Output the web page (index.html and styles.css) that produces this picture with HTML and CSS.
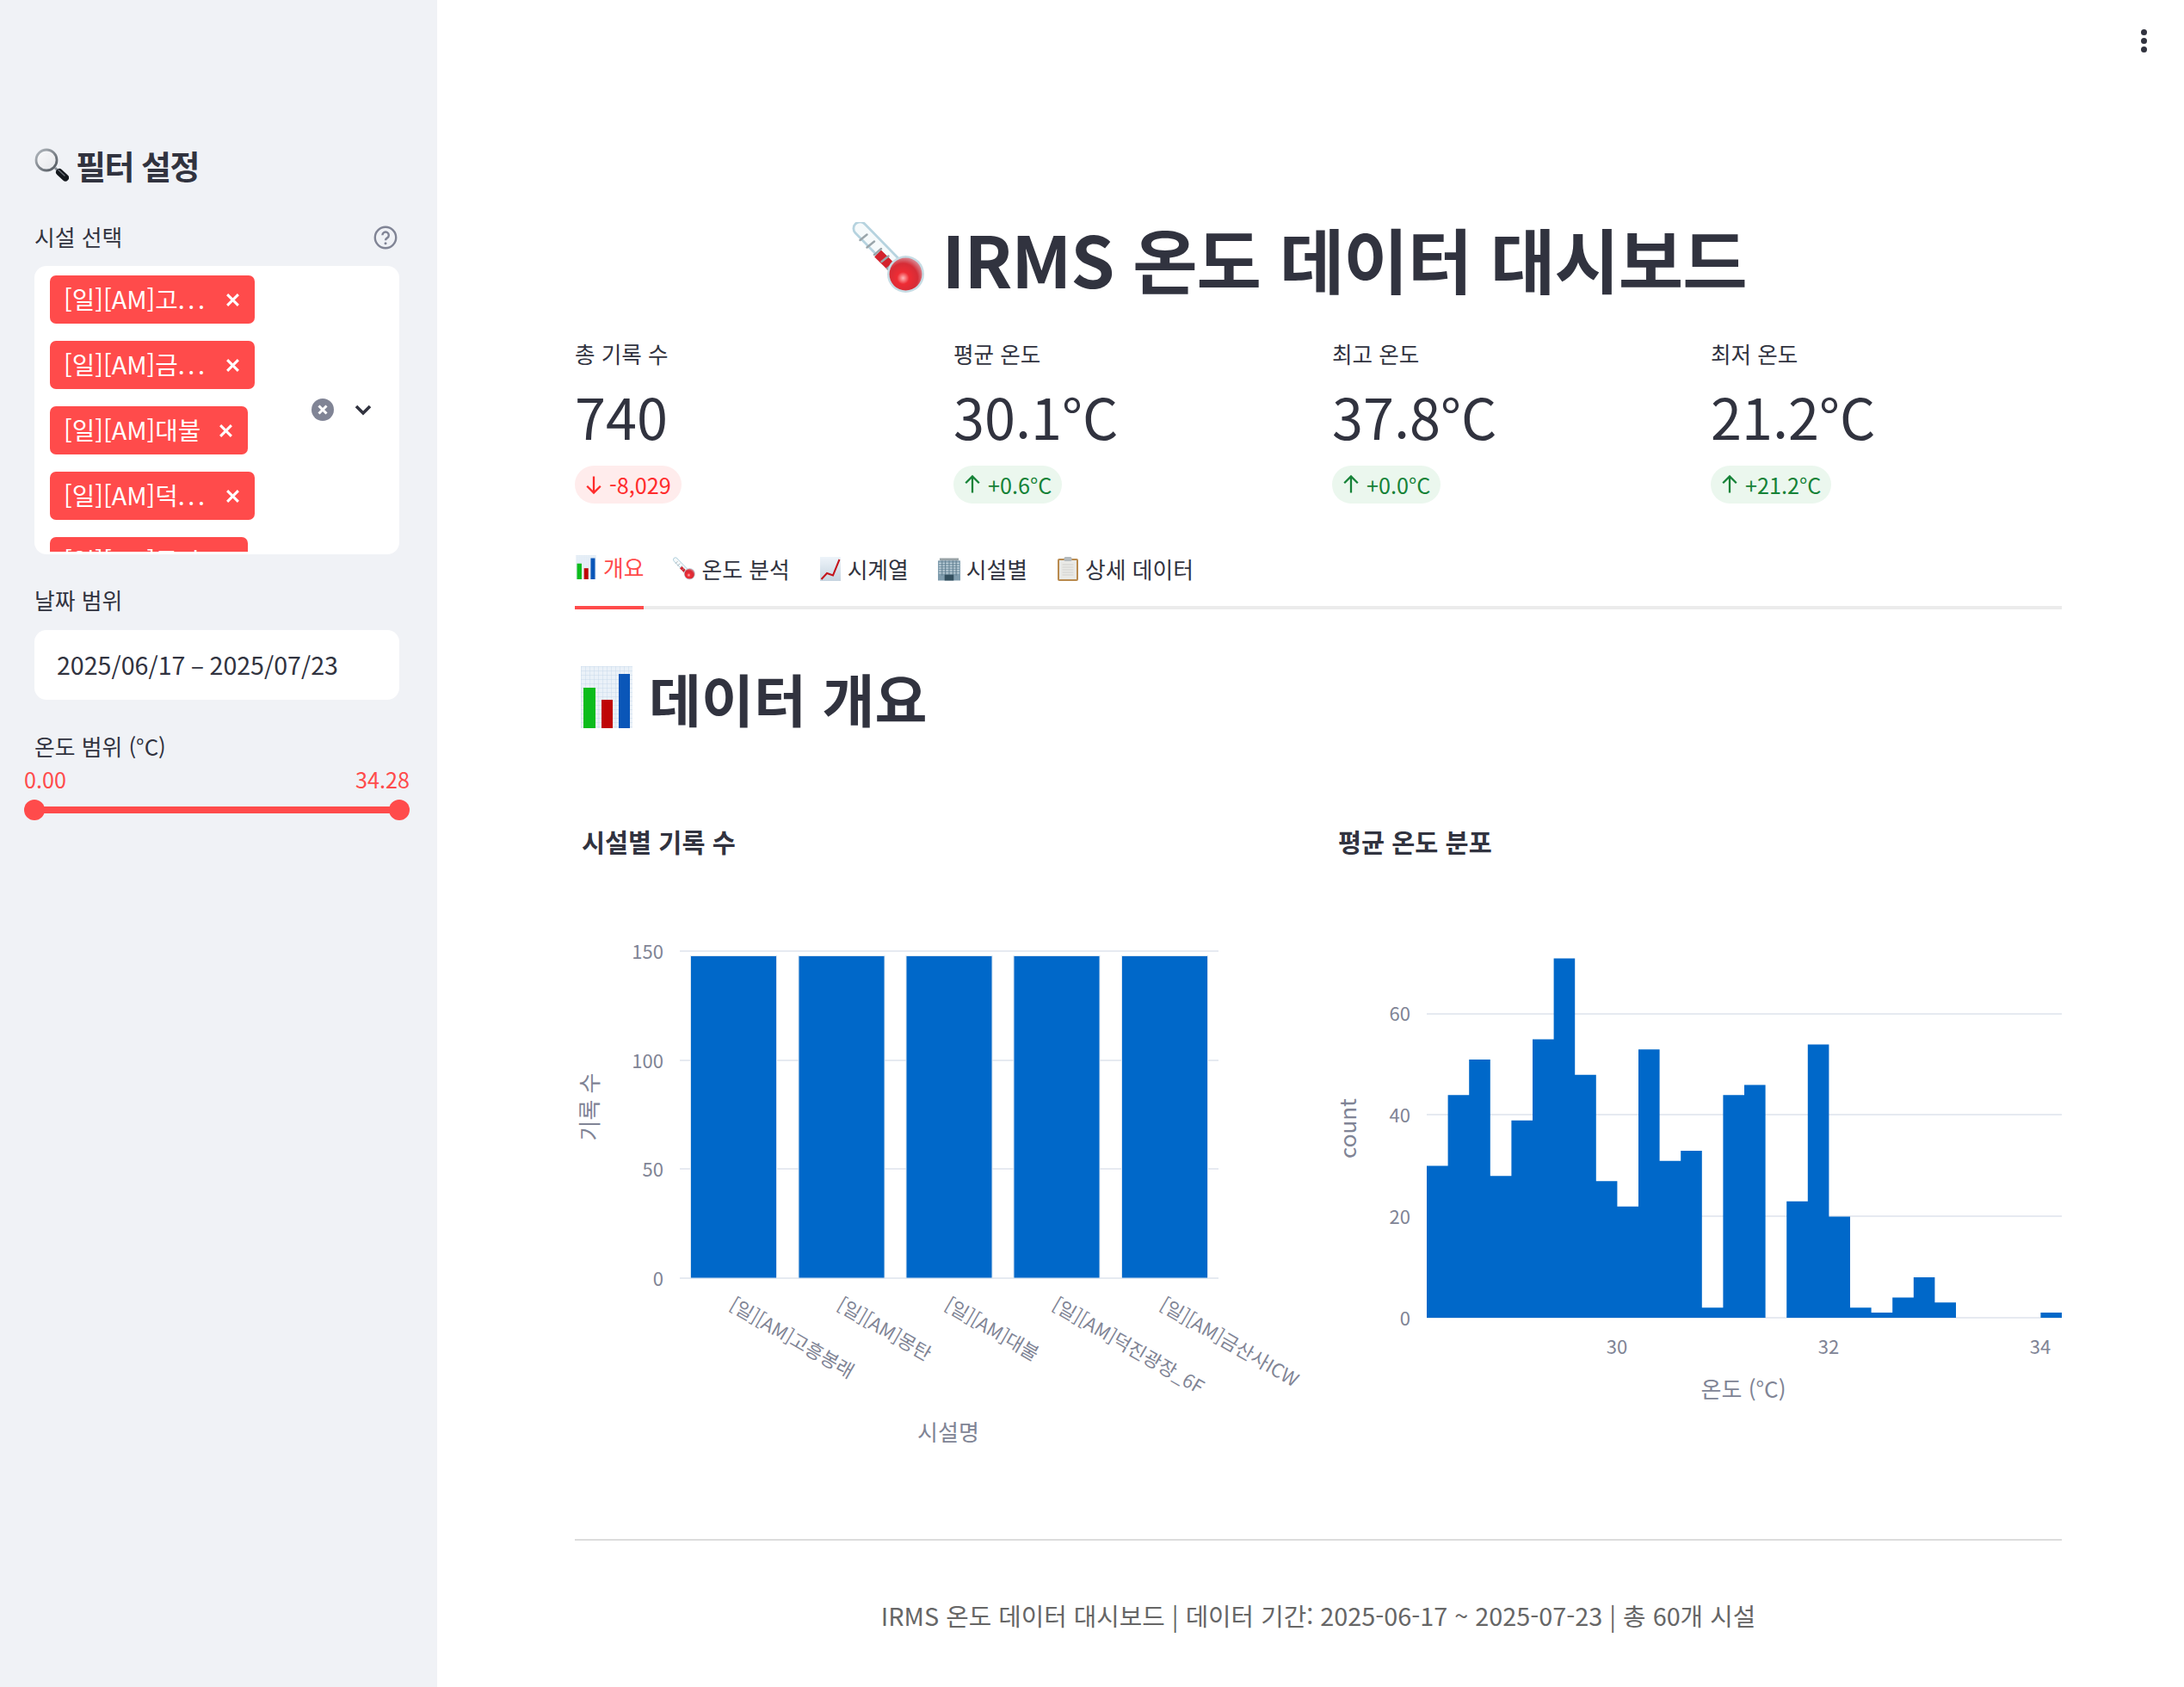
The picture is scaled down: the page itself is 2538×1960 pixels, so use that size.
FILE: index.html
```html
<!DOCTYPE html>
<html lang="ko">
<head>
    <meta charset="UTF-8">
    <title>IRMS 온도 데이터 대시보드</title>
    <link rel="stylesheet" href="styles.css">
</head>
<body>
    <svg class="sprite" xmlns="http://www.w3.org/2000/svg">
        <defs>
            <radialGradient id="bulbRed" cx="0.42" cy="0.62" r="0.62">
                <stop offset="0" stop-color="#ffb8b8"/>
                <stop offset="0.3" stop-color="#ee2c34"/>
                <stop offset="0.72" stop-color="#d62c36"/>
                <stop offset="1" stop-color="#d8808a"/>
            </radialGradient>
            <linearGradient id="lensFill" x1="0" y1="0" x2="1" y2="1">
                <stop offset="0" stop-color="#fbfbfc"/>
                <stop offset="1" stop-color="#e4e6e9"/>
            </linearGradient>
            <linearGradient id="lensRing" x1="0" y1="0" x2="1" y2="1">
                <stop offset="0" stop-color="#b4bac0"/>
                <stop offset="1" stop-color="#4f555c"/>
            </linearGradient>
            <linearGradient id="paperBlue" x1="0" y1="0" x2="0" y2="1">
                <stop offset="0" stop-color="#eef4fa"/>
                <stop offset="1" stop-color="#c6d4e0"/>
            </linearGradient>
            <pattern id="gridPaper" width="5" height="5" patternUnits="userSpaceOnUse">
                <path d="M5 0H0V5" fill="none" stroke="#c3d6e8" stroke-width="0.8"/>
            </pattern>
        </defs>
        <symbol id="icon-search" viewBox="0 0 40 40">
            <path d="M24 23 L28 27" stroke="#8a9097" stroke-width="3"/>
            <path d="M29 28 L36 34.5" stroke="#14181d" stroke-width="8" stroke-linecap="round"/>
            <path d="M28 25.5 L35 32" stroke="#6a7078" stroke-width="1.4" stroke-linecap="round"/>
            <circle cx="14" cy="14" r="12" fill="url(#lensFill)" stroke="url(#lensRing)" stroke-width="2.8"/>
        </symbol>
        <symbol id="icon-thermo" viewBox="0 0 84 84">
            <path d="M9.5 7.5 L54 53" stroke="#b6d3df" stroke-width="18" stroke-linecap="round"/>
            <path d="M9.5 7.5 L54 53" stroke="#f6fafb" stroke-width="12.5" stroke-linecap="round"/>
            <path d="M30 36.5 L56 62" stroke="#d3222c" stroke-width="11"/>
            <path d="M9.5 21L17.5 14.5M17.5 29.5L26 22.5M26 38L34 31M34.5 46L42.5 39.5M41 54L51 46" stroke="#9aa5aa" stroke-width="2.4" stroke-linecap="round"/>
            <circle cx="62.5" cy="60.5" r="21.5" fill="#c6dce4"/>
            <circle cx="62.5" cy="60.5" r="19" fill="url(#bulbRed)"/>
        </symbol>
        <symbol id="icon-bars" viewBox="0 0 60 72">
            <rect width="60" height="72" fill="#eaf1f8"/>
            <rect width="60" height="72" fill="url(#gridPaper)"/>
            <rect x="3" y="25" width="14" height="47" fill="#0cbc1c"/>
            <rect x="24" y="39" width="13" height="33" fill="#bf0606"/>
            <rect x="44" y="9" width="13" height="63" fill="#0a56b8"/>
        </symbol>
        <symbol id="icon-line" viewBox="0 0 24 28">
            <rect width="24" height="28" fill="url(#paperBlue)"/>
            <path d="M1.5 26 L8 19 L15 21.5 L22.5 3" fill="none" stroke="#c4141c" stroke-width="2"/>
        </symbol>
        <symbol id="icon-building" viewBox="0 0 27 28">
            <rect x="2" y="1" width="23" height="3" fill="#98a2a6"/>
            <rect x="0" y="4" width="27" height="24" fill="#7f9cad"/>
            <path d="M1 7H26M1 10H26M1 13H26M1 16H26M1 19H26" stroke="#dbe7ed" stroke-width="1"/>
            <path d="M5 4V22M9 4V22M13.5 4V22M18 4V22M22 4V22" stroke="#5f7b8b" stroke-width="1"/>
            <rect x="8" y="21" width="11" height="7" fill="#33505f"/>
        </symbol>
        <symbol id="icon-clip" viewBox="0 0 25 28">
            <rect x="0.5" y="2" width="24" height="26" rx="2" fill="#b98a4e"/>
            <rect x="2.5" y="4" width="20" height="22" fill="#e9e9e6"/>
            <path d="M6 9H19M6 12H19M6 15H19M6 18H19M6 21H19" stroke="#d2d2ce" stroke-width="1.2"/>
            <rect x="8" y="0" width="9" height="5" rx="1.5" fill="#b4babe"/>
        </symbol>
    </svg>

    <aside class="sidebar">
        <h2 class="side-title"><svg class="side-icon"><use href="#icon-search"/></svg>필터 설정</h2>

        <div class="field-label">
            <span>시설 선택</span>
            <svg class="help" viewBox="0 0 28 28">
                <circle cx="14" cy="14" r="12.2" fill="none" stroke="#808495" stroke-width="2.4"/>
                <path d="M10.4 11.2a3.7 3.7 0 1 1 5.6 3.2c-1.3.8-2 1.4-2 2.8" fill="none" stroke="#808495" stroke-width="2.4"/>
                <circle cx="14" cy="20.8" r="1.5" fill="#808495"/>
            </svg>
        </div>
        <div class="multiselect">
            <div class="chips">
                <div class="chip wide"><span class="chip-text">[일][AM]고<span class="dots">...</span></span><svg class="chip-x" viewBox="0 0 16 16"><path d="M2 2L14 14M14 2L2 14"/></svg></div>
                <div class="chip wide"><span class="chip-text">[일][AM]금<span class="dots">...</span></span><svg class="chip-x" viewBox="0 0 16 16"><path d="M2 2L14 14M14 2L2 14"/></svg></div>
                <div class="chip"><span class="chip-text">[일][AM]대불</span><svg class="chip-x" viewBox="0 0 16 16"><path d="M2 2L14 14M14 2L2 14"/></svg></div>
                <div class="chip wide"><span class="chip-text">[일][AM]덕<span class="dots">...</span></span><svg class="chip-x" viewBox="0 0 16 16"><path d="M2 2L14 14M14 2L2 14"/></svg></div>
                <div class="chip"><span class="chip-text">[일][AM]몽탄</span><svg class="chip-x" viewBox="0 0 16 16"><path d="M2 2L14 14M14 2L2 14"/></svg></div>
            </div>
            <div class="select-controls">
                <svg class="clear-all" viewBox="0 0 26 26">
                    <circle cx="13" cy="13" r="13" fill="#808495"/>
                    <path d="M8.5 8.5L17.5 17.5M17.5 8.5L8.5 17.5" stroke="#fff" stroke-width="3"/>
                </svg>
                <svg class="chevron" viewBox="0 0 20 14">
                    <path d="M2 3L10 11L18 3" fill="none" stroke="#31333f" stroke-width="3.6"/>
                </svg>
            </div>
        </div>

        <div class="field-label second"><span>날짜 범위</span></div>
        <div class="date-input">2025/06/17 – 2025/07/23</div>

        <div class="field-label third"><span>온도 범위 (°C)</span></div>
        <div class="slider-values"><span>0.00</span><span>34.28</span></div>
        <div class="slider">
            <span class="handle left"></span>
            <span class="handle right"></span>
        </div>
    </aside>

    <main class="main">
        <div class="kebab"><i></i><i></i><i></i></div>

        <h1 class="page-title"><svg class="title-icon"><use href="#icon-thermo"/></svg>IRMS 온도 데이터 대시보드</h1>

        <section class="metrics">
            <div class="metric">
                <div class="metric-label">총 기록 수</div>
                <div class="metric-value">740</div>
                <div class="delta down"><svg viewBox="0 0 20 20"><path d="M10 2V18M3.5 11.5L10 18L16.5 11.5"/></svg>-8,029</div>
            </div>
            <div class="metric">
                <div class="metric-label">평균 온도</div>
                <div class="metric-value">30.1°C</div>
                <div class="delta up"><svg viewBox="0 0 20 20"><path d="M10 18V2M3.5 8.5L10 2L16.5 8.5"/></svg>+0.6°C</div>
            </div>
            <div class="metric">
                <div class="metric-label">최고 온도</div>
                <div class="metric-value">37.8°C</div>
                <div class="delta up"><svg viewBox="0 0 20 20"><path d="M10 18V2M3.5 8.5L10 2L16.5 8.5"/></svg>+0.0°C</div>
            </div>
            <div class="metric">
                <div class="metric-label">최저 온도</div>
                <div class="metric-value">21.2°C</div>
                <div class="delta up"><svg viewBox="0 0 20 20"><path d="M10 18V2M3.5 8.5L10 2L16.5 8.5"/></svg>+21.2°C</div>
            </div>
        </section>

        <nav class="tabs">
            <div class="tab active"><svg class="tab-icon"><use href="#icon-bars"/></svg>개요</div>
            <div class="tab"><svg class="tab-icon"><use href="#icon-thermo"/></svg>온도 분석</div>
            <div class="tab"><svg class="tab-icon"><use href="#icon-line"/></svg>시계열</div>
            <div class="tab"><svg class="tab-icon"><use href="#icon-building"/></svg>시설별</div>
            <div class="tab"><svg class="tab-icon"><use href="#icon-clip"/></svg>상세 데이터</div>
        </nav>

        <h2 class="section-title"><svg class="section-icon"><use href="#icon-bars"/></svg>데이터 개요</h2>

        <section class="charts">
            <!-- viewBox uses page coordinates so the plot numbers stay easy to check -->
            <svg class="chart" viewBox="668 940 848 750">
                <text class="chart-title" x="676" y="990">시설별 기록 수</text>
                <path class="grid" d="M790 1105H1416M790 1232H1416M790 1358H1416M790 1485H1416"/>
                <text class="tick end" x="771" y="1114">150</text>
                <text class="tick end" x="771" y="1241">100</text>
                <text class="tick end" x="771" y="1367">50</text>
                <text class="tick end" x="771" y="1494">0</text>
                <rect class="bar" x="802.5" y="1110.5" width="100" height="374.5"/>
                <rect class="bar" x="928" y="1110.5" width="100" height="374.5"/>
                <rect class="bar" x="1053" y="1110.5" width="100" height="374.5"/>
                <rect class="bar" x="1178" y="1110.5" width="100" height="374.5"/>
                <rect class="bar" x="1303.5" y="1110.5" width="100" height="374.5"/>
                <text class="tick" transform="translate(846 1521) rotate(30)">[일][AM]고흥봉래</text>
                <text class="tick" transform="translate(971 1521) rotate(30)">[일][AM]몽탄</text>
                <text class="tick" transform="translate(1096 1521) rotate(30)">[일][AM]대불</text>
                <text class="tick" transform="translate(1221 1521) rotate(30)">[일][AM]덕진광장_6F</text>
                <text class="tick" transform="translate(1346 1521) rotate(30)">[일][AM]금산사ICW</text>
                <text class="axis-title middle" x="1102" y="1674">시설명</text>
                <text class="axis-title middle" transform="translate(695 1286) rotate(-90)">기록 수</text>
            </svg>

            <svg class="chart" viewBox="1548 940 848 750">
                <text class="chart-title" x="1555" y="990">평균 온도 분포</text>
                <path class="grid" d="M1658 1178H2396M1658 1295H2396M1658 1413H2396M1658 1531H2396"/>
                <text class="tick end" x="1639" y="1186">60</text>
                <text class="tick end" x="1639" y="1304">40</text>
                <text class="tick end" x="1639" y="1422">20</text>
                <text class="tick end" x="1639" y="1540">0</text>
                <!-- one unit = one bin wide, one record high -->
                <path class="hist" transform="translate(1658 1531) scale(24.6 -5.88)" d="M0 0V30H1V44H2V51H3V28H4V39H5V55H6V71H7V48H8V27H9V22H10V53H11V31H12V33H13V2H14V44H15V46H16V0H17V23H18V54H19V20H20V2H21V1H22V4H23V8H24V3H25V0ZM29 0V1H30V0Z"/>
                <text class="tick middle" x="1879" y="1573">30</text>
                <text class="tick middle" x="2125" y="1573">32</text>
                <text class="tick middle" x="2371" y="1573">34</text>
                <text class="axis-title middle" x="2026" y="1624">온도 (°C)</text>
                <text class="axis-title middle" transform="translate(1576 1311) rotate(-90)">count</text>
            </svg>
        </section>

        <hr class="rule">
        <p class="footer">IRMS 온도 데이터 대시보드 | 데이터 기간: 2025-06-17 ~ 2025-07-23 | 총 60개 시설</p>
    </main>
</body>
</html>
```

FILE: styles.css
```css
* {
    box-sizing: border-box;
}
body {
    margin: 0;
    height: 1960px;
    overflow: hidden;
    display: flex;
    background: #fff;
    color: #31333f;
    font-family: "Noto Sans CJK KR", "Noto Sans", sans-serif;
}
.sprite {
    display: block;
    flex: none;
    width: 0;
    height: 0;
}

/* sidebar */
.sidebar {
    flex: none;
    width: 508px;
    padding: 168px 44px 0 40px;
    background: #f0f2f6;
}
.side-title {
    display: flex;
    align-items: center;
    margin: 0 0 42px;
    height: 48px;
    font-size: 38px;
    font-weight: 700;
    letter-spacing: -1.5px;
    line-height: 48px;
}
.side-icon {
    width: 40px;
    height: 40px;
    margin-right: 8px;
}
.field-label {
    display: flex;
    justify-content: space-between;
    align-items: center;
    height: 40px;
    margin-top: -3.5px;
    margin-bottom: 14.5px;
    font-size: 25.8px;
}
.field-label.second {
    margin-top: 32.5px;
    margin-bottom: 15.5px;
}
.field-label.third {
    margin-top: 33px;
    margin-bottom: 1px;
}
.help {
    width: 28px;
    height: 28px;
    margin: 2px 2px 0 0;
}
.multiselect {
    display: flex;
    justify-content: space-between;
    height: 335px;
    padding: 11px 0 3px 18px;
    background: #fff;
    border-radius: 14px;
}
.chips {
    display: flex;
    flex-direction: column;
    align-items: flex-start;
    gap: 20px;
    overflow: hidden;
}
.chip {
    flex: none;
    display: flex;
    align-items: center;
    justify-content: space-between;
    width: 230px;
    height: 56px;
    padding: 0 17px 3px 16px;
    background: #ff4b4b;
    border-radius: 7px;
    color: #fff;
    font-size: 28.8px;
    white-space: nowrap;
}
.chip.wide {
    width: 238px;
}
.dots {
    letter-spacing: 3.5px;
}
.chip-x {
    flex: none;
    width: 17px;
    height: 17px;
    margin-top: 3px;
    fill: none;
    stroke: #fff;
    stroke-width: 2.8;
}
.select-controls {
    display: flex;
    align-items: center;
    gap: 24px;
    padding: 0 32px 9px 0;
}
.clear-all {
    width: 26px;
    height: 26px;
}
.chevron {
    width: 20px;
    height: 14px;
}
.date-input {
    height: 81px;
    padding: 0 26px;
    background: #fff;
    border-radius: 14px;
    font-size: 28.6px;
    line-height: 79px;
}
.slider-values {
    display: flex;
    justify-content: space-between;
    margin: 0 -12px;
    height: 36px;
    color: #ff4b4b;
    font-size: 25.2px;
    line-height: 36px;
}
.slider {
    position: relative;
    height: 8px;
    margin-top: 14px;
    background: #ff4b4b;
}
.handle {
    position: absolute;
    top: -8px;
    width: 24px;
    height: 24px;
    background: #ff4b4b;
    border-radius: 50%;
}
.handle.left {
    left: -12px;
}
.handle.right {
    right: -12px;
}

/* main column */
.main {
    position: relative;
    flex: 1;
    min-width: 0;
    padding: 250px 142px 0 160px;
}
.kebab {
    position: absolute;
    top: 34px;
    right: 43px;
    display: flex;
    flex-direction: column;
    gap: 3px;
}
.kebab i {
    width: 7px;
    height: 7px;
    background: #31333f;
    border-radius: 50%;
}
.page-title {
    display: flex;
    justify-content: center;
    align-items: center;
    height: 100px;
    margin: 0;
    padding-right: 44px;
    font-size: 82px;
    font-weight: 700;
    letter-spacing: -1.05px;
    line-height: 100px;
    white-space: nowrap;
}
.title-icon {
    width: 84px;
    height: 84px;
    margin-right: 20px;
}
.metrics {
    display: grid;
    grid-template-columns: repeat(4, 1fr);
    gap: 32px;
    margin-top: 43px;
}
.metric-label {
    height: 36px;
    font-size: 25.6px;
    line-height: 36px;
}
.metric-value {
    height: 80px;
    margin-top: 14px;
    font-size: 64.8px;
    line-height: 80px;
}
.delta {
    display: inline-flex;
    align-items: center;
    height: 44px;
    margin-top: 17.5px;
    padding: 0 12px 0 10px;
    border-radius: 22px;
    font-size: 25.2px;
}
.delta svg {
    width: 24px;
    height: 24px;
    margin-right: 6px;
    fill: none;
    stroke: currentColor;
    stroke-width: 1.9;
}
.delta.down {
    background: #ffecec;
    color: #ff2b2b;
}
.delta.up {
    background: #ebf7ee;
    color: #158237;
}
.tabs {
    display: flex;
    gap: 34px;
    height: 89px;
    margin-top: 34px;
    border-bottom: 4px solid #ebebeb;
    font-size: 25.8px;
}
.tab {
    display: flex;
    align-items: center;
    height: 89px;
    padding-bottom: 5px;
    white-space: nowrap;
}
.tab.active {
    border-bottom: 4px solid #ff4b4b;
    color: #ff4b4b;
}
.tab-icon {
    width: 26px;
    height: 28px;
    margin: 0 7px 0 0;
}
.section-title {
    display: flex;
    align-items: center;
    height: 90px;
    margin: 57px 0 0;
    font-size: 66.3px;
    font-weight: 700;
    line-height: 90px;
}
.section-icon {
    width: 62px;
    height: 72px;
    margin: 0 18px 0 6px;
}
.charts {
    display: grid;
    grid-template-columns: 1fr 1fr;
    gap: 32px;
    margin-top: 85.5px;
}
.chart {
    display: block;
    width: 848px;
    height: 750px;
    font-family: "Noto Sans CJK KR", "Noto Sans", sans-serif;
}
.chart-title {
    font-size: 29.4px;
    font-weight: 700;
    fill: #31333f;
}
.grid {
    fill: none;
    stroke: #e6eaf1;
    stroke-width: 2;
}
.tick {
    font-size: 22px;
    fill: #808495;
}
.axis-title {
    font-size: 26px;
    fill: #808495;
}
.end {
    text-anchor: end;
}
.middle {
    text-anchor: middle;
}
.bar {
    fill: #0068c9;
    stroke: #dbe6f1;
    stroke-width: 1;
}
.hist {
    fill: #0068c9;
}
.rule {
    height: 2px;
    margin: 98px 0 0;
    border: 0;
    background: #dcdcdc;
}
.footer {
    margin: 68.5px 0 0;
    color: #666;
    font-size: 28.8px;
    line-height: 36px;
    text-align: center;
}
```
